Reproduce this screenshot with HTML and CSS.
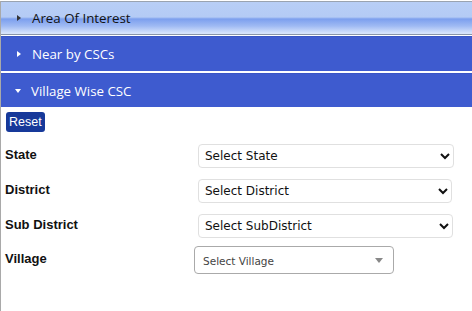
FILE: index.html
```html
<!DOCTYPE html>
<html>
<head>
<meta charset="utf-8">
<link rel="stylesheet" href="styles.css">
</head>
<body>
<div class="panel">
  <div class="head head-light"><span class="arrow-right dark"></span><span class="head-text">Area Of Interest</span></div>
  <div class="head head-blue"><span class="arrow-right"></span><span class="head-text">Near by CSCs</span></div>
  <div class="head head-blue head-open"><span class="arrow-down"></span><span class="head-text">Village Wise CSC</span></div>
  <div class="content">
    <button class="reset">Reset</button>
    <div class="form">
      <div class="row">
        <label class="lbl">State</label>
        <select class="sel sel-state"><option>Select State</option></select>
      </div>
      <div class="row">
        <label class="lbl">District</label>
        <select class="sel sel-district"><option>Select District</option></select>
      </div>
      <div class="row">
        <label class="lbl">Sub District</label>
        <select class="sel sel-sub"><option>Select SubDistrict</option></select>
      </div>
      <div class="row row-village">
        <label class="lbl">Village</label>
        <div class="combo"><span class="combo-text">Select Village</span><span class="combo-arrow"></span></div>
      </div>
    </div>
  </div>
</div>
</body>
</html>
```
FILE: styles.css
```css
html, body {
  margin: 0;
  padding: 0;
  background: #fff;
}
.panel {
  width: 472px;
  height: 311px;
  border-left: 1px solid #a9a9a9;
  box-sizing: border-box;
  font-family: "Open Sans", "Noto Sans", sans-serif;
}
.head {
  display: flex;
  align-items: center;
  box-sizing: border-box;
  font-size: 13.3px;
}
.head-light {
  margin-top: 1px;
  height: 34px;
  border-top: 1px solid #9aa3b0;
  border-bottom: 1px solid #8a96a8;
  background: linear-gradient(to bottom, #b8cef6 0px, #b4cbf5 15px, #7c9fee 17px, #9fbaf3 24px, #d6e3fb 31px);
  color: #111;
}
.head-blue {
  height: 35px;
  background: #3e5bcf;
  border-top: 1px solid #3a55c4;
  color: #fff;
  margin-top: 1px;
}
.head-open {
  margin-top: 2px;
  height: 34px;
}
.head-text {
  margin-left: 11px;
}
.arrow-right {
  margin-left: 16px;
  width: 0;
  height: 0;
  border-top: 3.5px solid transparent;
  border-bottom: 3.5px solid transparent;
  border-left: 4px solid #fff;
}
.arrow-right.dark {
  border-left-color: #333;
}
.arrow-down {
  margin-left: 14px;
  margin-right: -1px;
  width: 0;
  height: 0;
  border-left: 3.5px solid transparent;
  border-right: 3.5px solid transparent;
  border-top: 4px solid #fff;
}
.content {
  padding: 5px 0 0 4px;
}
.reset {
  display: block;
  margin: 0 0 0 1px;
  padding: 0 3px;
  height: 20px;
  background: #17399a;
  color: #fff;
  border: none;
  border-radius: 3px;
  font-family: "Liberation Sans", Arial, sans-serif;
  font-size: 12.5px;
  line-height: 20px;
}
.form {
  margin-top: 12px;
  display: flex;
  flex-direction: column;
  gap: 11px;
}
.row {
  display: flex;
  align-items: center;
  height: 24px;
}
.lbl {
  width: 193px;
  font-family: "Liberation Sans", Arial, sans-serif;
  font-weight: bold;
  font-size: 13px;
  color: #111;
  margin-top: -3px;
}
.sel {
  height: 24px;
  border: 1px solid #e0e0e0;
  border-radius: 4px;
  background: #fff;
  font-family: "DejaVu Sans", Verdana, sans-serif;
  font-size: 12px;
  color: #111;
  padding: 0 2px;
}
.sel-state { width: 256px; }
.sel-district { width: 254px; }
.sel-sub { width: 255px; }
.row-village {
  height: 28px;
  margin-top: -3px;
}
.row-village .lbl {
  width: 189px;
  margin-top: -4px;
}
.combo {
  width: 200px;
  height: 28px;
  box-sizing: border-box;
  border: 1px solid #aaa;
  border-radius: 4px;
  display: flex;
  align-items: center;
  justify-content: space-between;
  padding: 0 10px 0 8px;
}
.combo-text {
  font-family: "DejaVu Sans", Verdana, sans-serif;
  font-size: 10.5px;
  color: #444;
  margin-top: 2px;
}
.combo-arrow {
  width: 0;
  height: 0;
  border-left: 4px solid transparent;
  border-right: 4px solid transparent;
  border-top: 5px solid #888;
}
```
